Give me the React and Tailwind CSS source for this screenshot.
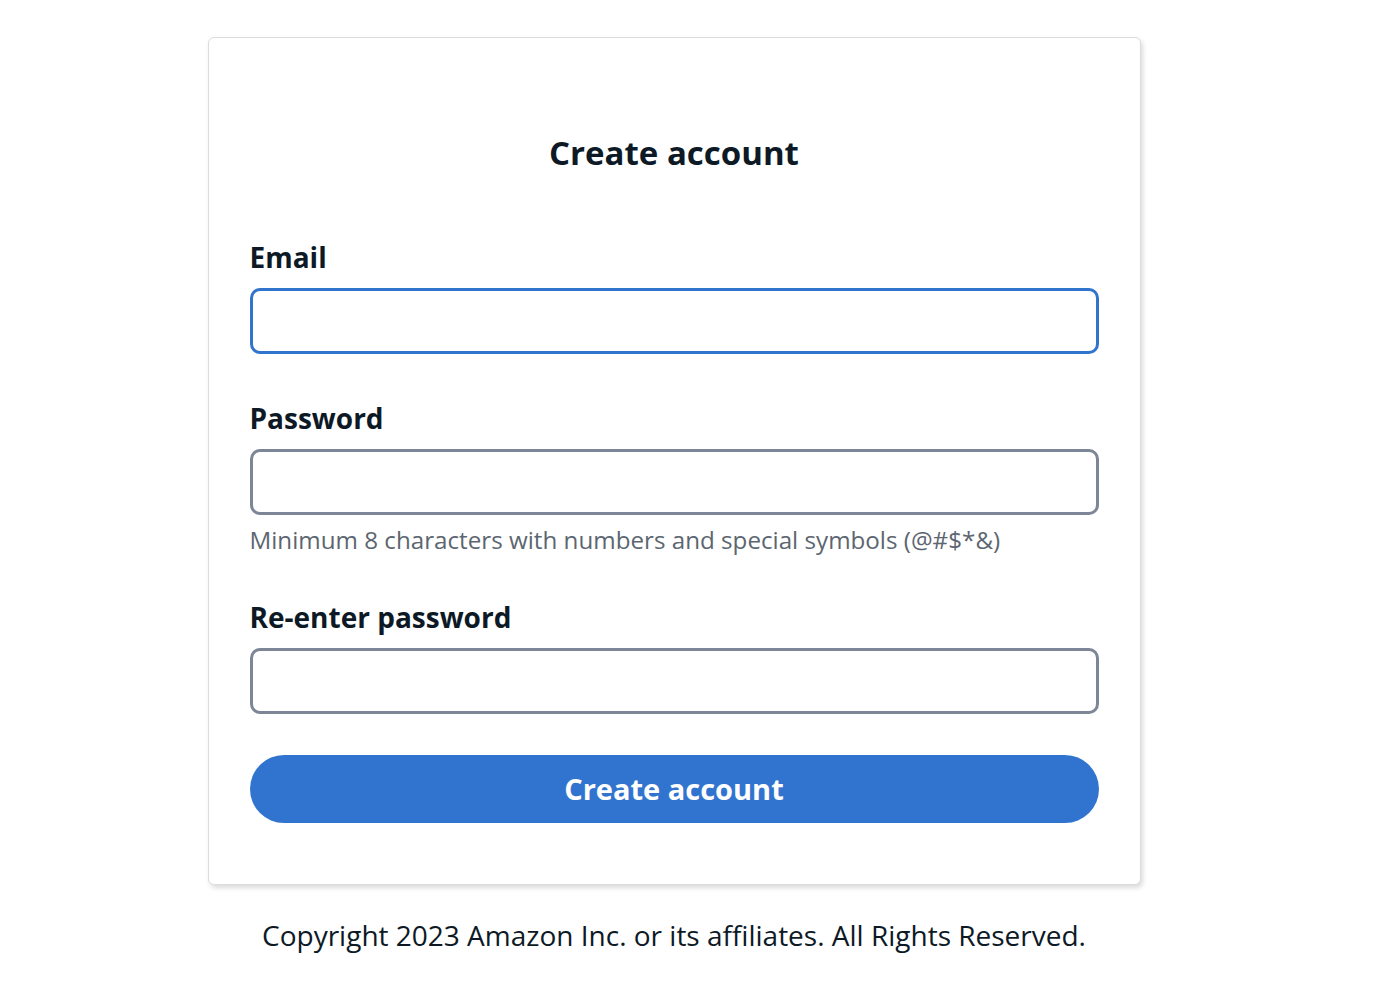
import React from "react"

const Field = ({label, focused, hint}) => (
    <div className="flex flex-col">
        <label className="text-[28px] leading-[36px] font-bold text-[#0d1a26]">{label}</label>
        <input
            type={label === "Email" ? "email" : "password"}
            className={`mt-[13px] h-[66px] w-full rounded-[10px] border-[3px] bg-white px-4 text-[24px] outline-none ${focused ? "border-[#3174cd]" : "border-[#7d8696]"}`}
        />
        {hint && (
            <p className="mt-[12px] text-[24.2px] leading-[26px] text-[#5c6670]">{hint}</p>
        )}
    </div>
)

export default function App() {
    return (
        <div className="min-h-screen bg-white font-['Open_Sans',sans-serif]">
            <div className="w-[1348px] flex flex-col items-center pt-[37px]">
                {/* card */}
                <div className="w-[933px] rounded-[6px] border border-[#dcdcdc] bg-white px-[41px] pt-[93px] pb-[61px] shadow-[2px_3px_5px_rgba(0,0,0,0.14)]">
                    <h1 className="text-center text-[33px] leading-[44px] font-bold text-[#0d1a26]">Create account</h1>
                    <div className="mt-[64px] flex flex-col gap-[46px]">
                        <Field label="Email" focused/>
                        <Field label="Password" hint="Minimum 8 characters with numbers and special symbols (@#$*&)"/>
                        <Field label="Re-enter password"/>
                    </div>
                    <button className="mt-[41px] h-[68px] w-full rounded-full bg-[#3174cf] text-[29px] font-bold text-white">
                        Create account
                    </button>
                </div>
                <p className="mt-[31px] text-[28px] leading-[38px] text-[#0d1a26]">
                    Copyright 2023 Amazon Inc. or its affiliates. All Rights Reserved.
                </p>
            </div>
        </div>
    )
}
